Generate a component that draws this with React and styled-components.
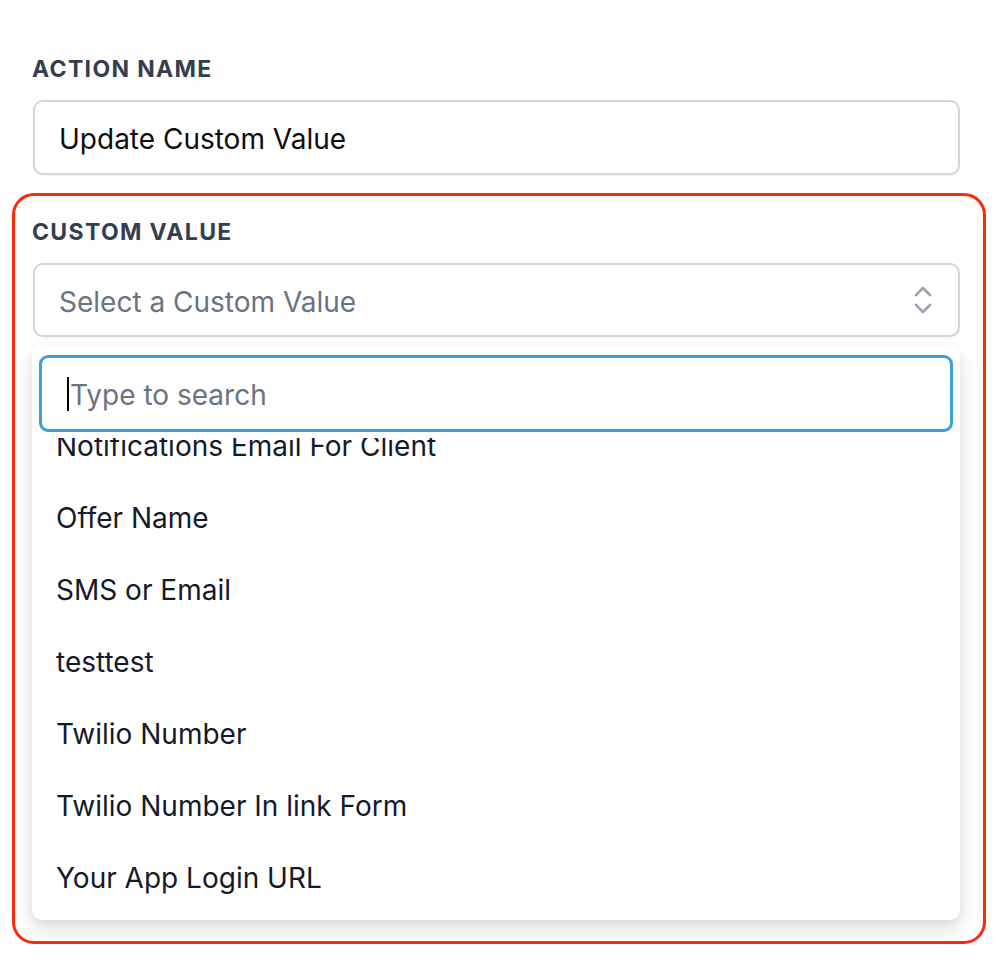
import React from "react";
import styled, { createGlobalStyle } from "styled-components";

const GlobalStyle = createGlobalStyle`
  html, body { margin: 0; padding: 0; background: #ffffff; }
  body { font-family: Inter, "Noto Sans", "Liberation Sans", sans-serif; -webkit-font-smoothing: antialiased; }
  * { box-sizing: border-box; }
`;

const Page = styled.div`
  width: 998px;
  padding: 52px 0 22px 12px;
`;

const FieldCard = styled.section`
  width: 928px;
  margin-left: ${(p) => p.$inset}px;
  background: #fefefe;
  border-radius: 10px;
  display: flex;
  flex-direction: column;
`;

const Label = styled.div`
  font-size: 23px;
  line-height: 28px;
  font-weight: 700;
  letter-spacing: 1.35px;
  color: #343e4f;
  padding-top: 3px;
  margin-bottom: 17px;
`;

const Box = styled.div`
  height: ${(p) => p.$h}px;
  margin-left: 1px;
  border: 2px solid #d3d5db;
  border-radius: 10px;
  background: #ffffff;
  box-shadow: 0 1px 2px rgba(0, 0, 0, 0.06);
  display: flex;
  align-items: center;
  justify-content: space-between;
  padding: 3px 26px 0 24px;
  font-size: 28px;
  color: ${(p) => (p.$placeholder ? "#6b7280" : "#0d0d0d")};
`;

const Icon = styled.svg`
  margin-top: -3px;
`;

const Highlight = styled.div`
  width: 974px;
  margin-top: 18px;
  border: 3px solid #fd2a0a;
  border-radius: 22px;
  padding: 19px 0 21px 17px;
`;

const Panel = styled.div`
  width: 928px;
  margin-top: 8px;
  background: #ffffff;
  border-radius: 10px;
  box-shadow: 0 10px 22px rgba(0, 0, 0, 0.13), 0 2px 6px rgba(0, 0, 0, 0.05);
  padding: 10px 7px 7px;
`;

const Search = styled.div`
  height: 77px;
  margin-bottom: 6px;
  border: 3px solid #3a9fdb;
  border-radius: 9px;
  display: flex;
  align-items: center;
  padding: 3px 0 0 25px;
  font-size: 28px;
  color: #6b7280;
  background: #ffffff;
`;

const Caret = styled.span`
  display: inline-block;
  width: 2px;
  height: 34px;
  background: #000000;
  margin: -3px 1px 0 0;
`;

const Viewport = styled.div`
  height: 475px;
  overflow: hidden;
`;

const List = styled.ul`
  list-style: none;
  margin: -29px 0 0;
  padding: 0;
`;

const Item = styled.li`
  height: 72px;
  display: flex;
  align-items: center;
  padding: 2px 0 0 17px;
  font-size: 28px;
  color: #131a2a;
`;

const Chevrons = () => (
  <Icon width="18" height="30" viewBox="0 0 18 30" fill="none" stroke="#9ca3af" strokeWidth="2.6" strokeLinecap="round" strokeLinejoin="round">
    <path d="M2 10 L9 3 L16 10" />
    <path d="M2 20 L9 27 L16 20" />
  </Icon>
);

const items = [
  "Notifications Email For Client",
  "Offer Name",
  "SMS or Email",
  "testtest",
  "Twilio Number",
  "Twilio Number In link Form",
  "Your App Login URL",
];

export default function App() {
  return (
    <>
      <GlobalStyle />
      <Page>
        <FieldCard $inset={20}>
          <Label>ACTION NAME</Label>
          <Box $h={75}>Update Custom Value</Box>
        </FieldCard>
        <Highlight>
          <FieldCard $inset={0}>
            <Label>CUSTOM VALUE</Label>
            <Box $h={74} $placeholder>
              <span>Select a Custom Value</span>
              <Chevrons />
            </Box>
          </FieldCard>
          <Panel>
            <Search>
              <Caret />
              Type to search
            </Search>
            <Viewport>
              <List>
                {items.map((t) => (
                  <Item key={t}>{t}</Item>
                ))}
              </List>
            </Viewport>
          </Panel>
        </Highlight>
      </Page>
    </>
  );
}
